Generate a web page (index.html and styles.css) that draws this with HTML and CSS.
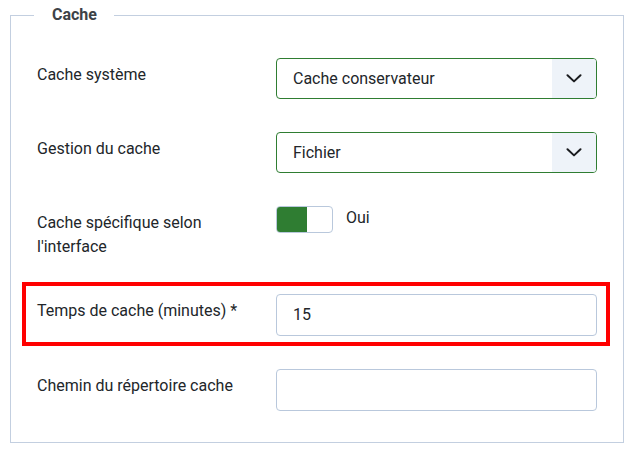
FILE: index.html
```html
<!DOCTYPE html>
<html lang="fr">
<head>
<meta charset="utf-8">
<title>Cache</title>
<link rel="stylesheet" href="styles.css">
</head>
<body>
<fieldset class="options">
  <legend class="options-legend">Cache</legend>

  <div class="control-group">
    <label class="control-label" for="caching">Cache système</label>
    <div class="controls">
      <div class="select valid">
        <span class="select-value">Cache conservateur</span>
        <span class="select-caret">
          <svg width="16" height="9" viewBox="0 0 16 9"><path d="M1.5 1.2 L8 7.4 L14.5 1.2" fill="none" stroke="#1b1d20" stroke-width="2" stroke-linecap="round" stroke-linejoin="round"/></svg>
        </span>
      </div>
    </div>
  </div>

  <div class="control-group">
    <label class="control-label" for="handler">Gestion du cache</label>
    <div class="controls">
      <div class="select valid">
        <span class="select-value">Fichier</span>
        <span class="select-caret">
          <svg width="16" height="9" viewBox="0 0 16 9"><path d="M1.5 1.2 L8 7.4 L14.5 1.2" fill="none" stroke="#1b1d20" stroke-width="2" stroke-linecap="round" stroke-linejoin="round"/></svg>
        </span>
      </div>
    </div>
  </div>

  <div class="control-group switch-group">
    <label class="control-label">Cache spécifique selon l'interface</label>
    <div class="controls switch-row">
      <span class="switch"><span class="switch-on"></span></span>
      <span class="switch-label">Oui</span>
    </div>
  </div>

  <div class="control-group highlighted">
    <label class="control-label" for="cachetime">Temps de cache (minutes) *</label>
    <div class="controls">
      <div class="input">15</div>
    </div>
    <div class="highlight-box"></div>
  </div>

  <div class="control-group last">
    <label class="control-label" for="cachepath">Chemin du répertoire cache</label>
    <div class="controls">
      <div class="input"></div>
    </div>
  </div>
</fieldset>
</body>
</html>
```
FILE: styles.css
```css
html, body {
  margin: 0;
  padding: 0;
  background: #ffffff;
}

body {
  padding: 3px 12px 0 10px;
  font-family: Roboto, "Liberation Sans", sans-serif;
  font-size: 16px;
  line-height: 24px;
  color: #22262a;
}

.options {
  margin: 0;
  border: 1px solid #c3cfe0;
  padding: 31px 26px 31px 26px;
  min-width: 0;
}

.options-legend {
  font-weight: 700;
  font-size: 16px;
  line-height: 24px;
  color: #3d4247;
  padding: 0 17px 0 18px;
  margin-left: -3px;
}

.control-group {
  display: grid;
  grid-template-columns: 239px 1fr;
  align-items: start;
  margin-bottom: 33px;
  position: relative;
}

.control-group.switch-group {
  margin-bottom: 35px;
}

.control-group.last {
  margin-bottom: 0;
}

.control-label {
  padding-top: 5px;
  padding-right: 20px;
  color: #22262a;
}

.select {
  display: flex;
  height: 41px;
  box-sizing: border-box;
  border: 1px solid #2f7d32;
  border-radius: 4px;
  overflow: hidden;
  background: #ffffff;
}

.select-value {
  flex: 1;
  padding-left: 16px;
  line-height: 39px;
  color: #22262a;
}

.select-caret {
  width: 44px;
  background: #eef3f9;
  display: flex;
  align-items: center;
  justify-content: center;
}

.switch-row {
  display: flex;
  align-items: flex-start;
  gap: 13px;
}

.switch {
  display: flex;
  width: 57px;
  height: 27px;
  box-sizing: border-box;
  border: 1px solid #b9c8dc;
  border-radius: 4px;
  overflow: hidden;
  background: #ffffff;
}

.switch-on {
  width: 30px;
  background: #2f7d32;
}

.switch-label {
  line-height: 24px;
  margin-top: 0;
  color: #22262a;
}

.input {
  height: 42px;
  box-sizing: border-box;
  border: 1px solid #b9c8dc;
  border-radius: 4px;
  padding-left: 16px;
  line-height: 40px;
  color: #22262a;
  background: #ffffff;
}

.highlight-box {
  position: absolute;
  left: -15px;
  top: -12px;
  right: -13px;
  bottom: -10px;
  border: 4px solid #ff0000;
  pointer-events: none;
}
```
